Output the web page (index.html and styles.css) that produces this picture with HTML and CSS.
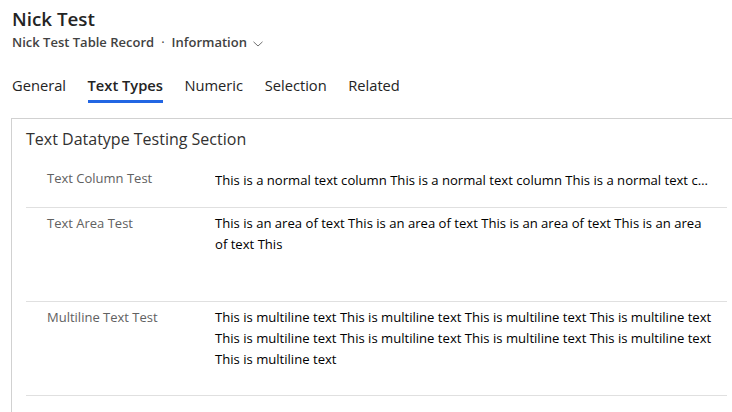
FILE: index.html
```html
<!DOCTYPE html>
<html>
<head>
<meta charset="utf-8">
<link rel="stylesheet" href="styles.css">
</head>
<body>
<header class="header">
  <h1 class="title">Nick Test</h1>
  <div class="subtitle">
    <span>Nick Test Table Record</span>
    <span class="dot">·</span>
    <span class="form">Information</span>
    <svg class="chev" width="10" height="6" viewBox="0 0 10 6"><path d="M0.5 0.8 L5 5 L9.5 0.8" fill="none" stroke="#707070" stroke-width="1"/></svg>
  </div>
</header>
<nav class="tabs">
  <span class="tab">General</span>
  <span class="tab active">Text Types</span>
  <span class="tab">Numeric</span>
  <span class="tab">Selection</span>
  <span class="tab">Related</span>
</nav>
<section class="card">
  <h2 class="section-title">Text Datatype Testing Section</h2>
  <div class="row row-single">
    <div class="label">Text Column Test</div>
    <div class="value ellipsis">This is a normal text column This is a normal text column This is a normal text column This is a normal text column</div>
  </div>
  <div class="row row-area">
    <div class="label">Text Area Test</div>
    <div class="value">This is an area of text This is an area of text This is an area of text This is an area of text This</div>
  </div>
  <div class="row row-area">
    <div class="label">Multiline Text Test</div>
    <div class="value">This is multiline text This is multiline text This is multiline text This is multiline text This is multiline text This is multiline text This is multiline text This is multiline text This is multiline text</div>
  </div>
</section>
</body>
</html>
```
FILE: styles.css
```css
html, body {
  margin: 0;
  padding: 0;
  background: #ffffff;
  font-family: "Open Sans", "Noto Sans", sans-serif;
  color: #242424;
  overflow: hidden;
}
body {
  height: 412px;
  display: flex;
  flex-direction: column;
}
.header {
  padding: 7px 12px 0 12px;
}
.title {
  margin: 0;
  font-size: 18.8px;
  font-weight: 600;
  line-height: 25px;
  color: #242424;
}
.subtitle {
  display: flex;
  align-items: center;
  gap: 7px;
  font-size: 13px;
  font-weight: 600;
  line-height: 20px;
  color: #424242;
}
.dot { font-weight: 400; }
.chev { margin-left: -1px; margin-top: 3px; }
.tabs {
  display: flex;
  gap: 21.5px;
  padding: 23px 12px 0 12px;
}
.tab {
  font-size: 14.7px;
  line-height: 20px;
  color: #242424;
  padding-bottom: 5px;
  border-bottom: 3px solid transparent;
}
.tab.active {
  font-weight: 600;
  border-bottom-color: #2266e3;
}
.card {
  flex: 1;
  min-height: 0;
  margin: 15px 0 0 11px;
  border-top: 1px solid #d1d1d1;
  border-left: 1px solid #d1d1d1;
  padding: 9px 0 0 14px;
}
.section-title {
  margin: 0 0 18px 0;
  font-size: 16px;
  font-weight: 400;
  line-height: 22px;
  color: #323130;
}
.row {
  display: flex;
  margin-right: 5px;
  border-bottom: 1px solid #e0e0e0;
}
.row-single { padding-bottom: 16px; }
.row-single .value { padding-top: 2px; }
.row-area { padding-top: 5px; padding-bottom: 25px; }
.row-area .value { min-height: 63px; }
.label {
  flex: 0 0 168px;
  padding-left: 21px;
  font-size: 13px;
  line-height: 21px;
  color: #616161;
}
.value {
  flex: 1;
  min-width: 0;
  padding-right: 12px;
  font-size: 13.1px;
  line-height: 21px;
  color: #000000;
}
.ellipsis {
  white-space: nowrap;
  overflow: hidden;
  text-overflow: ellipsis;
}
```
